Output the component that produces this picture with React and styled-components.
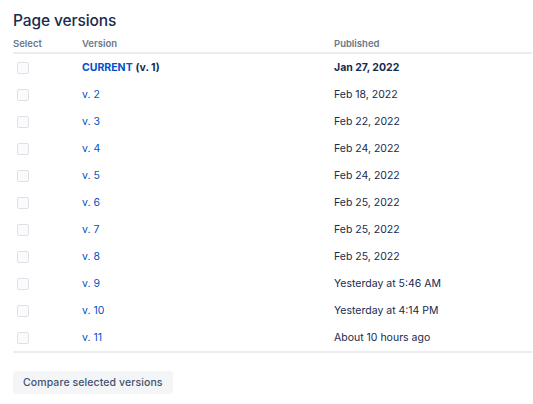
import React from "react";
import { createGlobalStyle, styled } from "styled-components";

const Global = createGlobalStyle`
  body {
    margin: 0;
    background: #fff;
    font-family: Inter, "Noto Sans", "Liberation Sans", sans-serif;
    color: #172B4D;
  }
`;

const Page = styled.div`
  padding: 11px 1px 0 13px;
`;

const Title = styled.h2`
  margin: 0 0 5px;
  font-size: 15.5px;
  line-height: 19px;
  font-weight: 500;
  letter-spacing: -0.1px;
  color: #172B4D;
`;

const Table = styled.div`
  border-bottom: 2px solid #EBECF0;
`;

const Row = styled.div`
  display: grid;
  grid-template-columns: 69px 252px 1fr;
  align-items: center;
  height: ${(p) => (p.$head ? "16px" : "27px")};
  font-size: 10.5px;
  ${(p) => p.$head && "border-bottom: 2px solid #EBECF0; padding-bottom: 1px;"}
`;

const HeadCell = styled.div`
  font-size: 9.5px;
  font-weight: 600;
  color: #6B778C;
`;

const Box = styled.span`
  display: block;
  width: 10px;
  height: 10px;
  margin-left: 4px;
  border: 1px solid #DFE1E6;
  border-radius: 2px;
  background: #FAFBFC;
`;

const VersionLink = styled.a`
  color: #0052CC;
  text-decoration: none;
  font-weight: ${(p) => (p.$bold ? 700 : 400)};
`;

const Strong = styled.span`
  font-weight: 700;
`;

const Date = styled.div`
  font-weight: ${(p) => (p.$bold ? 700 : 400)};
`;

const Button = styled.button`
  margin-top: 18px;
  height: 23px;
  padding: 0 10px;
  border: none;
  border-radius: 3px;
  background: #F4F5F7;
  color: #42526E;
  font-family: inherit;
  font-size: 10.5px;
  font-weight: 500;
  letter-spacing: 0.1px;
`;

const versions = [
  ["v. 2", "Feb 18, 2022"],
  ["v. 3", "Feb 22, 2022"],
  ["v. 4", "Feb 24, 2022"],
  ["v. 5", "Feb 24, 2022"],
  ["v. 6", "Feb 25, 2022"],
  ["v. 7", "Feb 25, 2022"],
  ["v. 8", "Feb 25, 2022"],
  ["v. 9", "Yesterday at 5:46 AM"],
  ["v. 10", "Yesterday at 4:14 PM"],
  ["v. 11", "About 10 hours ago"],
];

export default function App() {
  return (
    <Page>
      <Global />
      <Title>Page versions</Title>
      <Table>
        <Row $head>
          <HeadCell>Select</HeadCell>
          <HeadCell>Version</HeadCell>
          <HeadCell>Published</HeadCell>
        </Row>
        <Row>
          <Box />
          <div>
            <VersionLink $bold>CURRENT</VersionLink> <Strong>(v. 1)</Strong>
          </div>
          <Date $bold>Jan 27, 2022</Date>
        </Row>
        {versions.map(([v, d]) => (
          <Row key={v}>
            <Box />
            <div>
              <VersionLink>{v}</VersionLink>
            </div>
            <Date>{d}</Date>
          </Row>
        ))}
      </Table>
      <Button>Compare selected versions</Button>
    </Page>
  );
}
